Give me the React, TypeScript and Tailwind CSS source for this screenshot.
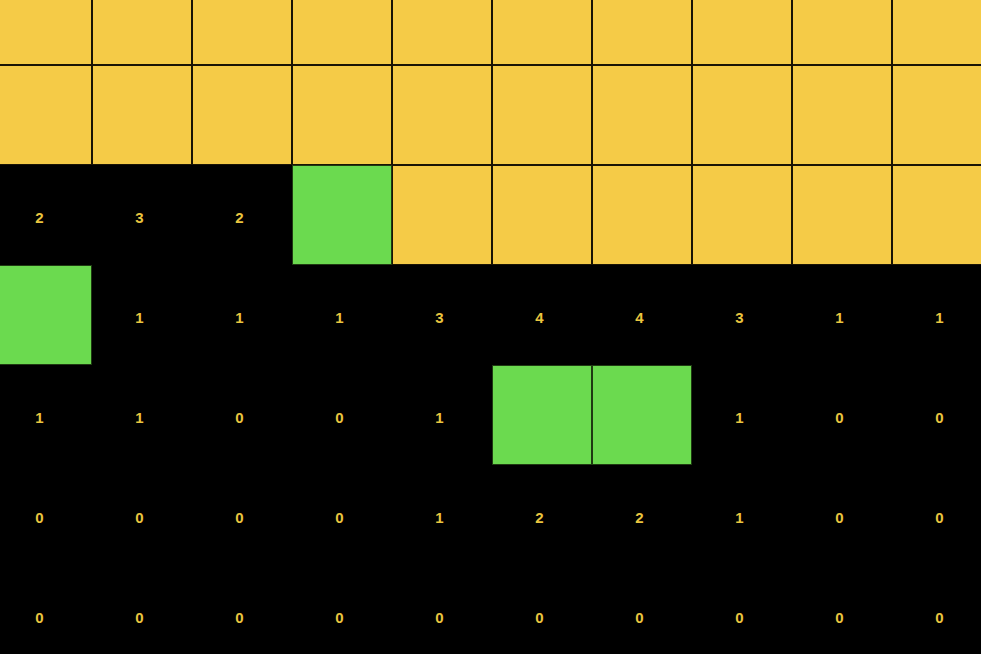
import React from "react";

type Cell = "Y" | "G" | number;

const rows: Cell[][] = [
  ["Y", "Y", "Y", "Y", "Y", "Y", "Y", "Y", "Y", "Y"],
  ["Y", "Y", "Y", "Y", "Y", "Y", "Y", "Y", "Y", "Y"],
  [2, 3, 2, "G", "Y", "Y", "Y", "Y", "Y", "Y"],
  ["G", 1, 1, 1, 3, 4, 4, 3, 1, 1],
  [1, 1, 0, 0, 1, "G", "G", 1, 0, 0],
  [0, 0, 0, 0, 1, 2, 2, 1, 0, 0],
  [0, 0, 0, 0, 0, 0, 0, 0, 0, 0],
];

export default function App() {
  return (
    <div className="w-[981px] h-[654px] overflow-hidden bg-black">
      <div
        className="ml-[-8px] mt-[-35px] grid grid-cols-[repeat(10,100px)] grid-rows-[repeat(7,100px)] w-[1000px]"
        style={{ fontFamily: '"Liberation Sans", Arial, sans-serif' }}
      >
        {rows.flatMap((row, r) =>
          row.map((c, i) => {
            if (c === "Y")
              return (
                <div
                  key={`${r}-${i}`}
                  className="box-border border border-[#1a1405] bg-[#F5CB47]"
                />
              );
            if (c === "G")
              return (
                <div
                  key={`${r}-${i}`}
                  className="box-border border border-[#1f3a12] bg-[#6BDA4F]"
                />
              );
            return (
              <div
                key={`${r}-${i}`}
                className="flex items-center justify-center bg-black pt-[7px] pr-[5px] text-[15px] font-semibold text-[#EAC53F]"
              >
                {c}
              </div>
            );
          })
        )}
      </div>
    </div>
  );
}
